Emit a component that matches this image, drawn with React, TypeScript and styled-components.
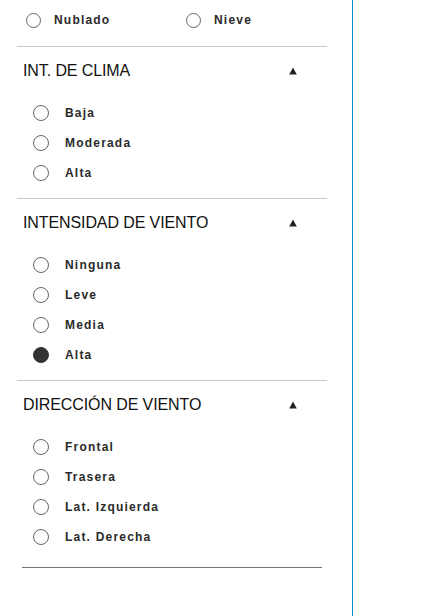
import React from 'react';
import styled, { createGlobalStyle } from 'styled-components';

const GlobalStyle = createGlobalStyle`
    html, body {
        margin: 0;
        padding: 0;
        background: #fff;
    }
    body {
        font-family: "Liberation Sans", Arial, sans-serif;
    }
`;

const Panel = styled.div`
    width: 353px;
    min-height: 616px;
    border-right: 1px solid #0088d4;
    box-sizing: border-box;
    padding: 5px 0 0 17px;
`;

const Content = styled.div`
    width: 310px;
`;

const TopRow = styled.div`
    display: grid;
    grid-template-columns: 160px 1fr;
    padding: 0 0 11px 9px;
    border-bottom: 1px solid #c8c8c8;
`;

const Section = styled.section<{ $last?: boolean }>`
    padding-top: 15px;
    padding-bottom: ${p => (p.$last ? '15px' : '10px')};
    border-bottom: ${p => (p.$last ? 'none' : '1px solid #c8c8c8')};
`;

const Header = styled.div`
    display: flex;
    align-items: center;
    justify-content: space-between;
    height: 18px;
    padding: 0 30px 0 6px;
    font-size: 16px;
    line-height: 18px;
    color: #111;
    letter-spacing: -0.1px;
`;

const Arrow = styled.svg`
    width: 8px;
    height: 8px;
    display: block;
`;

const OptionList = styled.div`
    margin-top: 18px;
    padding-left: 16px;
`;

const Option = styled.label<{ $gap?: number }>`
    display: flex;
    align-items: center;
    height: 30px;
    gap: ${p => p.$gap ?? 16}px;
    font-size: 12px;
    font-weight: bold;
    letter-spacing: 1.2px;
    color: #2a2a2a;
`;

const Circle = styled.span<{ $checked?: boolean; $size?: number }>`
    width: ${p => p.$size ?? 16}px;
    height: ${p => p.$size ?? 16}px;
    box-sizing: border-box;
    border-radius: 50%;
    border: 1px solid ${p => (p.$checked ? '#333' : '#666')};
    background: ${p => (p.$checked ? '#333' : '#fff')};
    flex-shrink: 0;
`;

const BottomLine = styled.div`
    margin-left: 5px;
    width: 300px;
    border-top: 1px solid #777;
`;

type Group = { title: string; options: string[]; checked?: string };

const groups: Group[] = [
    { title: 'INT. DE CLIMA', options: ['Baja', 'Moderada', 'Alta'] },
    { title: 'INTENSIDAD DE VIENTO', options: ['Ninguna', 'Leve', 'Media', 'Alta'], checked: 'Alta' },
    { title: 'DIRECCIÓN DE VIENTO', options: ['Frontal', 'Trasera', 'Lat. Izquierda', 'Lat. Derecha'] },
];

const App = () => {
    return (
        <>
            <GlobalStyle />
            <Panel>
                <Content>
                    <TopRow>
                        <Option $gap={13}>
                            <Circle $size={15} />
                            Nublado
                        </Option>
                        <Option $gap={13}>
                            <Circle $size={15} />
                            Nieve
                        </Option>
                    </TopRow>
                    {groups.map((g, i) => (
                        <Section key={g.title} $last={i === groups.length - 1}>
                            <Header>
                                <span>{g.title}</span>
                                <Arrow viewBox="0 0 8 8">
                                    <polygon points="4,0.5 7.8,7.5 0.2,7.5" fill="#222" />
                                </Arrow>
                            </Header>
                            <OptionList>
                                {g.options.map(o => (
                                    <Option key={o}>
                                        <Circle $checked={g.checked === o} />
                                        {o}
                                    </Option>
                                ))}
                            </OptionList>
                        </Section>
                    ))}
                    <BottomLine />
                </Content>
            </Panel>
        </>
    );
};

export default App;
